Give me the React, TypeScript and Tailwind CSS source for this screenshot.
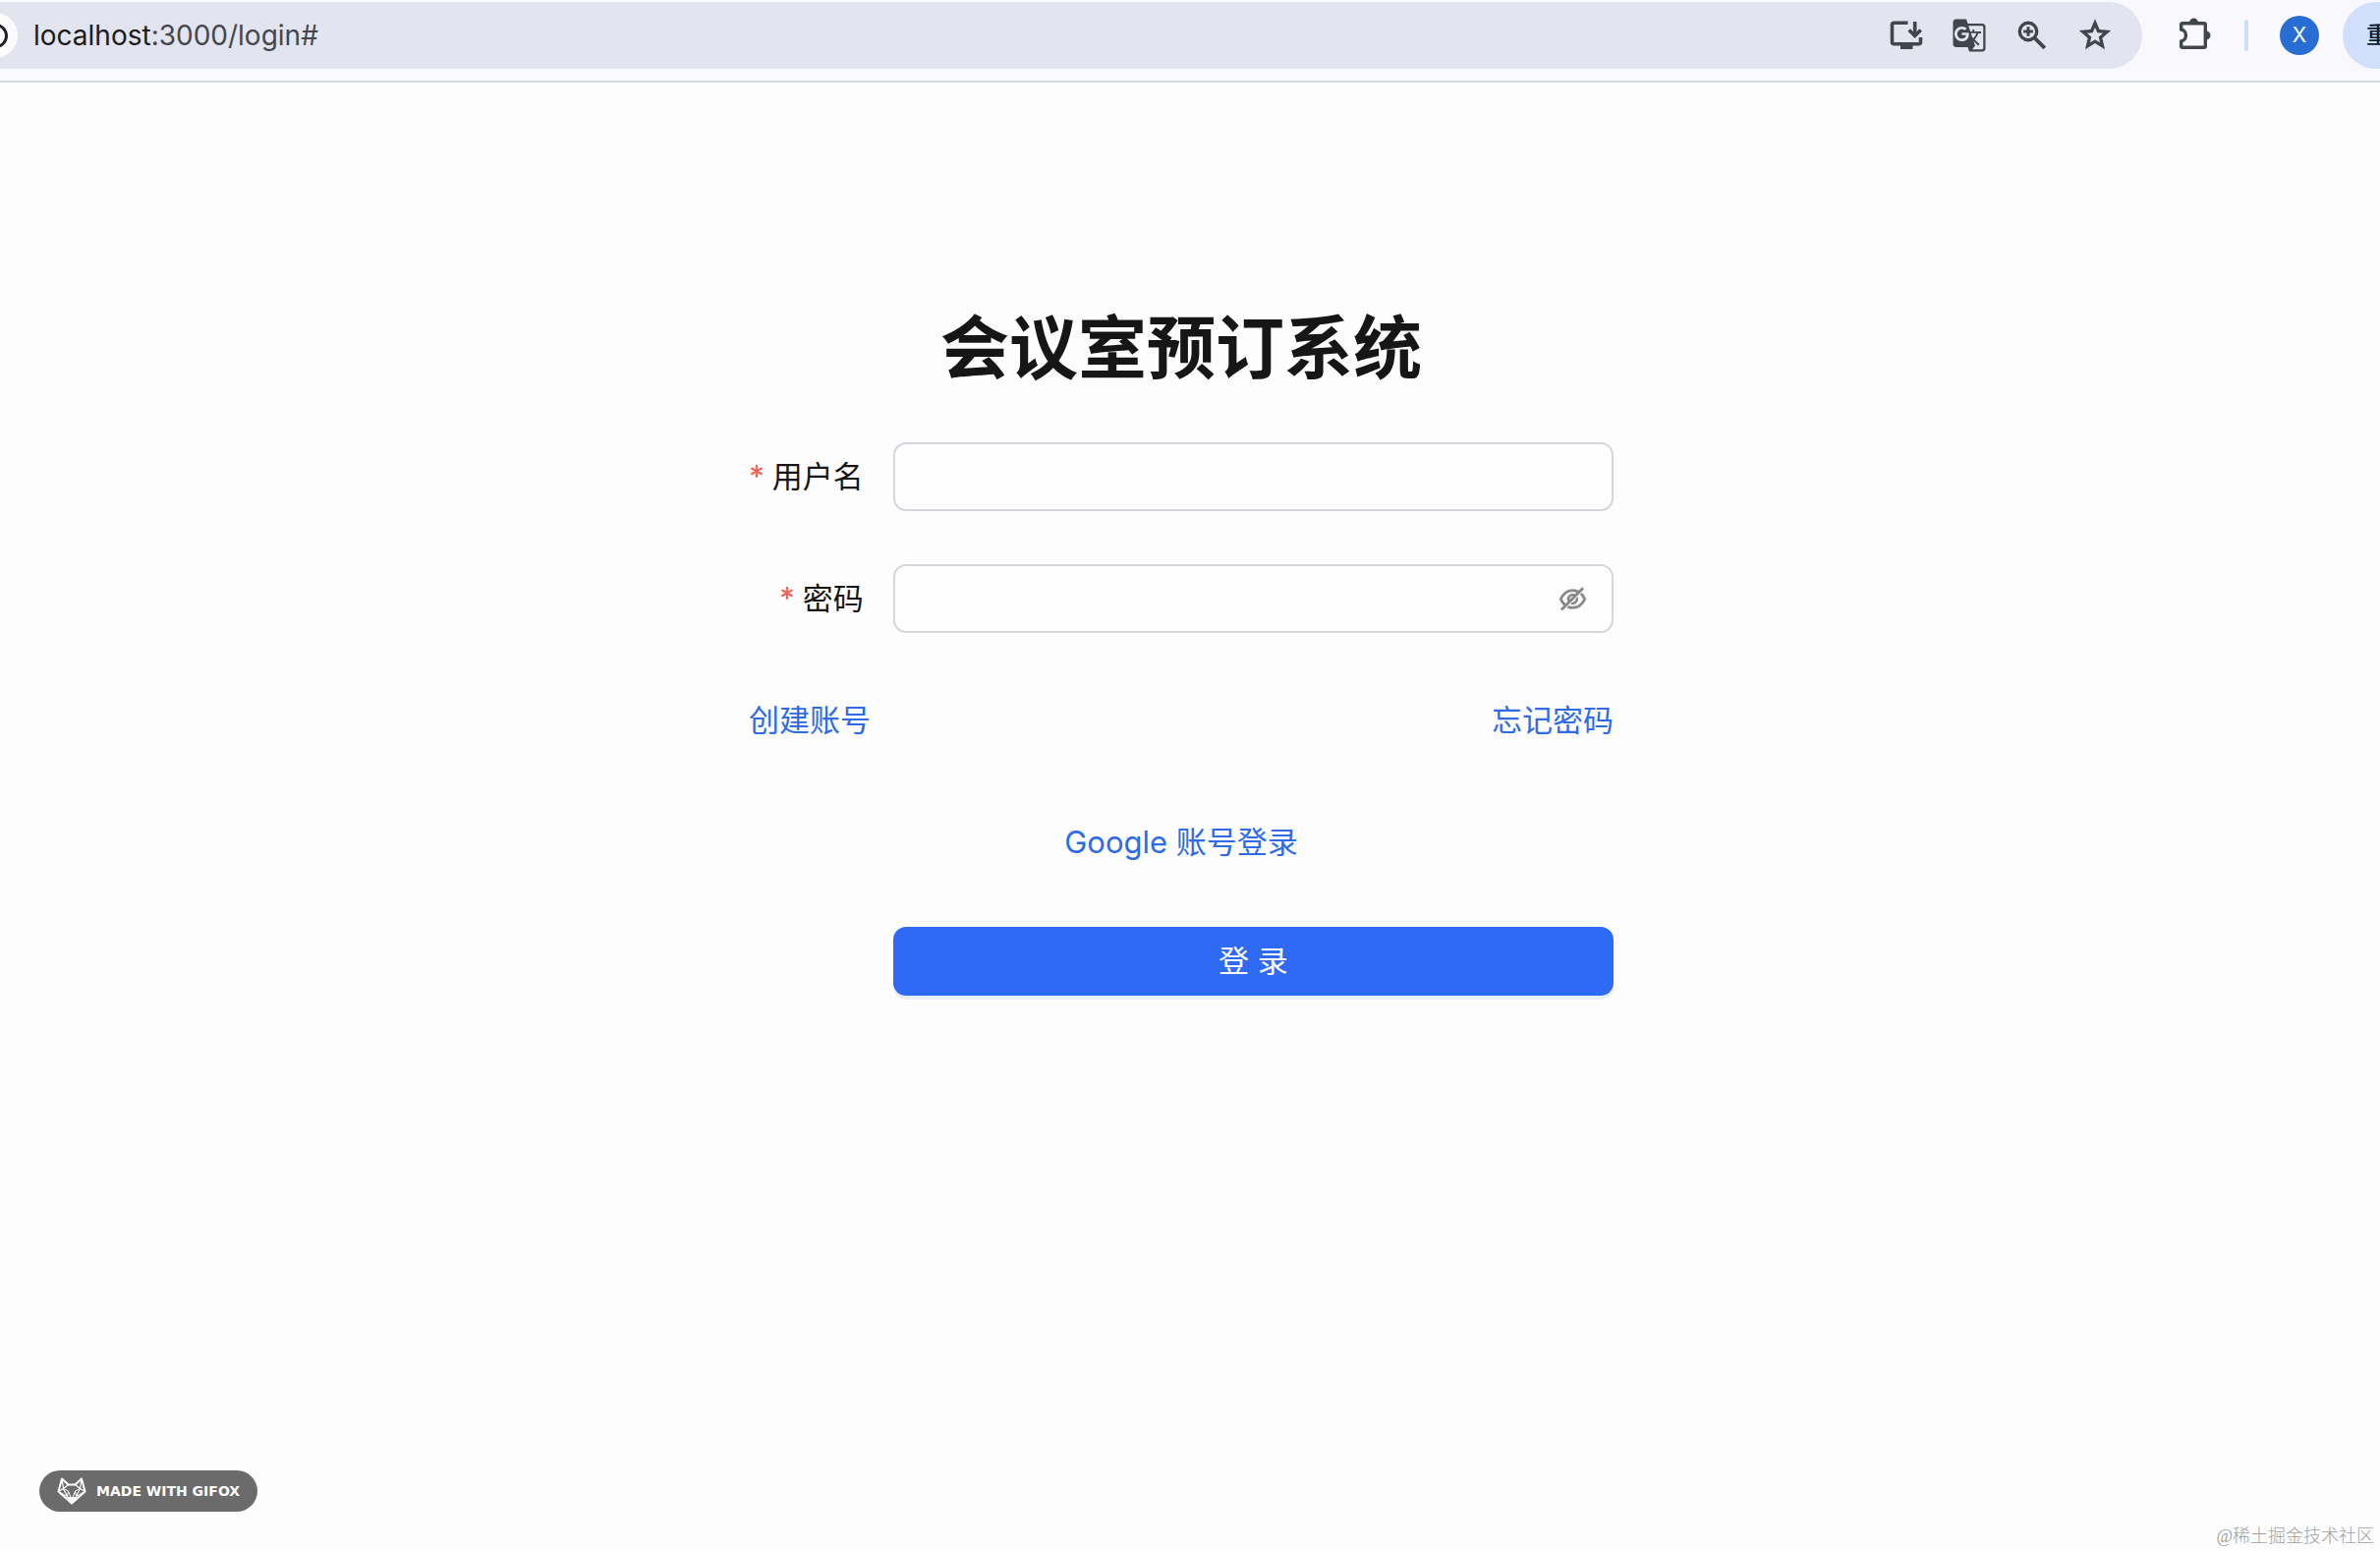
import { useState } from "react";
import { AiOutlineEye, AiOutlineEyeInvisible } from "react-icons/ai";
import { MdGTranslate } from "react-icons/md";

const InstallIcon = () => (
  <svg width="36" height="36" viewBox="0 0 36 36" fill="none" stroke="currentColor" strokeWidth="3.600">
    <path d="M19.500 5.300H5.500c-1.200 0-2 .8-2 2v17.400c0 1.200.8 2 2 2h25c1.200 0 2-.8 2-2v-4.700" />
    <path d="M26.700 4v13M20.700 12.500l6 6 6-6" />
    <path d="M12 26.500h12.500v5.500H12z" fill="currentColor" stroke="none" />
  </svg>
);

const ZoomIcon = () => (
  <svg width="36" height="36" viewBox="0 0 36 36" fill="none" stroke="currentColor" strokeWidth="3.400">
    <circle cx="14" cy="14" r="8.700" />
    <path d="M20.300 20.300l10.500 10.500" strokeWidth="3.800" />
    <path d="M14 9.200v9.600M9.200 14h9.600" strokeWidth="3" />
  </svg>
);

const StarIcon = () => (
  <svg width="36" height="36" viewBox="0.92 1.2 22.15 22.15" fill="currentColor">
    <path
      fillRule="evenodd"
      d="M22 9.24l-7.190-.62L12 2 9.190 8.630 2 9.240l5.460 4.730L5.820 21 12 17.270 18.180 21l-1.630-7.030L22 9.240zM12 14.900l-3.100 1.860.82-3.540-2.740-2.370 3.610-.31L12 7.200l1.410 3.340 3.610.31-2.740 2.370.82 3.540z"
    />
  </svg>
);

const ExtensionIcon = () => (
  <svg width="32" height="32" viewBox="0 0 32 32" fill="none">
    <path
      d="M1.7 12.3V7.2c0-.9.6-1.5 1.5-1.5h21.6c.9 0 1.5.6 1.5 1.5v21.6c0 .9-.6 1.5-1.5 1.5H3.2c-.9 0-1.5-.6-1.5-1.5v-5.1c2.800 0 4.700-2.500 4.700-5.700s-1.900-5.700-4.700-5.700z"
      stroke="#41454c"
      strokeWidth="3.400"
      strokeLinejoin="round"
    />
    <path d="M10 5a4.500 4.500 0 0 1 9 0zM27 13.500a4.500 4.500 0 0 1 0 9z" fill="#41454c" />
  </svg>
);

const FoxIcon = () => (
  <svg width="30" height="28" viewBox="0 0 30 28" fill="none" stroke="#fff" strokeLinejoin="round">
    <path d="M5 1.500l6.500 6h7l6.500-6 3.500 13L15 26.500 1.500 14.500z" strokeWidth="2" />
    <path d="M5 1.500l1.500 10L1.500 14.500M25 1.500l-1.500 10 5 3M11.500 7.500l-5 4 4 8 4.500 6 4.500-6 4-8-5-4" strokeWidth="1.200" />
    <path d="M1.500 14.500l9 5 1-5.500-5-2.500M28.500 14.500l-9 5-1-5.500 5-2.500M11.500 14l3.500 9 3.500-9" strokeWidth="1" />
    <path d="M10.500 20.500h9L15 26.500z" fill="#fff" />
  </svg>
);

const BrowserBar = () => {
  return (
    <header className="flex h-[84px] w-full items-start overflow-hidden border-b-2 border-[#d5dce4] bg-[#f9f9fd] pt-[2px]">
      {/* ============ address ================ */}
      <div className="flex h-[68px] min-w-0 flex-1 items-center overflow-hidden rounded-r-full bg-[#e2e4ef]">
        <div className="flex h-[46px] w-[18px] shrink-0 justify-end">
          <button aria-label="查看网站信息" className="flex h-[46px] w-[46px] shrink-0 items-center justify-center rounded-full bg-[#fbfbfe]">
            <span className="h-[25px] w-[25px] rounded-full border-[3px] border-[#1f1f1f]"></span>
          </button>
        </div>
        <p className="ml-4 flex-1 text-[28px] leading-[34px] text-[#44474c]">
          <span className="text-[#1c1c1e]">localhost</span>:3000/login#
        </p>
        <div className="flex items-center gap-7 pr-[30px] text-[36px] text-[#41454c]">
          <button aria-label="安装应用">
            <InstallIcon />
          </button>
          <button aria-label="翻译此页">
            <MdGTranslate />
          </button>
          <button aria-label="缩放">
            <ZoomIcon />
          </button>
          <button aria-label="添加书签">
            <StarIcon />
          </button>
        </div>
      </div>
      {/* ============ profile ================ */}
      <div className="flex h-[68px] shrink-0 items-center pl-[38px]">
        <button aria-label="扩展程序" className="-mt-1">
          <ExtensionIcon />
        </button>
        <span className="ml-[34px] h-8 w-1 rounded-full bg-[#cdddfb]"></span>
        <button className="ml-8 h-10 w-10 rounded-full bg-[#276dd4] text-[21px] text-white">X</button>
        <div className="ml-6 h-[68px] w-[38px] overflow-hidden">
          <button className="h-[68px] w-[90px] rounded-l-full bg-[#cfdffc] pl-6 text-left text-[24px] font-medium text-[#0b1c33]">
            重
          </button>
        </div>
      </div>
    </header>
  );
};

const LoginForm = () => {
  const [visible, setVisible] = useState(false);

  return (
    <form className="w-full max-w-[880px] text-[31px] leading-[46px]" onSubmit={(e) => e.preventDefault()}>
      <h1 className="text-center text-[70px] leading-[88px] font-semibold text-[#161616]">会议室预订系统</h1>

      <div className="mt-[51px] grid grid-cols-[1fr_5fr] items-center">
        <label htmlFor="username" className="flex justify-end gap-2 pr-[30px] whitespace-nowrap text-[#161616]">
          <span className="text-[#f0604f]">*</span>用户名
        </label>
        <input
          id="username"
          type="text"
          className="h-[70px] w-full rounded-[13px] border-2 border-[#d3d6dc] bg-white/50 px-6 outline-none focus:border-[#2f6af5]"
        />
      </div>

      <div className="mt-[54px] grid grid-cols-[1fr_5fr] items-center">
        <label htmlFor="password" className="flex justify-end gap-2 pr-[30px] whitespace-nowrap text-[#161616]">
          <span className="text-[#f0604f]">*</span>密码
        </label>
        <div className="flex h-[70px] items-center rounded-[13px] border-2 border-[#d3d6dc] bg-white/50 px-6 focus-within:border-[#2f6af5]">
          <input id="password" type={visible ? "text" : "password"} className="min-w-0 flex-1 outline-none" />
          <button type="button" aria-label="显示密码" onClick={() => setVisible(!visible)} className="text-[#868686]">
            {visible ? <AiOutlineEye /> : <AiOutlineEyeInvisible strokeWidth={24} />}
          </button>
        </div>
      </div>

      <div className="mt-[54px] flex h-[70px] items-center justify-between text-[#2f6be6]">
        <a href="#">创建账号</a>
        <a href="#">忘记密码</a>
      </div>

      <div className="mt-[54px] flex h-[70px] items-center justify-center text-[#2f6be6]">
        <a href="#">Google 账号登录</a>
      </div>

      <div className="mt-[51px] grid grid-cols-[1fr_5fr]">
        <button
          type="submit"
          className="col-start-2 h-[70px] rounded-[13px] bg-[#2f6af5] text-white shadow-[0_4px_0_#e8effc]"
        >
          登 录
        </button>
      </div>
    </form>
  );
};

const App = () => {
  return (
    <div className="flex min-h-screen flex-col bg-[#fdfdfd] font-[Inter,'Noto_Sans_CJK_SC',sans-serif]">
      <BrowserBar />
      <main className="flex justify-center pt-[227px] pr-[18px]">
        <LoginForm />
      </main>
      <footer className="mt-auto flex items-end justify-between">
        <div className="mb-10 ml-10 flex h-[42px] items-center gap-[10px] rounded-full bg-[#6b6b6b] px-[18px] font-['DejaVu_Sans',sans-serif] text-[14px] font-bold text-white">
          <FoxIcon />
          MADE WITH GIFOX
        </div>
        <p className="pr-[6px] pb-[2px] font-['Liberation_Serif','Noto_Sans_CJK_SC',serif] text-[18px] leading-[26px] font-light text-[#a0a0a0]">
          @稀土掘金技术社区
        </p>
      </footer>
    </div>
  );
};

export default App;
